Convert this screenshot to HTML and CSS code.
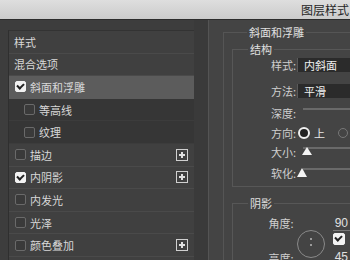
FILE: index.html
```html
<!DOCTYPE html>
<html lang="zh">
<head>
    <meta charset="UTF-8">
    <title>图层样式</title>
    <link rel="stylesheet" href="styles.css">
</head>
<body>
<div class="titlebar">图层样式</div>
<div class="dialog">
    <div class="sidebar">
        <div class="row head">样式</div>
        <div class="row head">混合选项</div>
        <div class="row active"><span class="check on"></span>斜面和浮雕</div>
        <div class="subgroup">
            <div class="row sub"><span class="check"></span>等高线</div>
            <div class="row sub"><span class="check"></span>纹理</div>
        </div>
        <div class="row"><span class="check"></span>描边<span class="plus"></span></div>
        <div class="row"><span class="check on"></span>内阴影<span class="plus"></span></div>
        <div class="row"><span class="check"></span>内发光</div>
        <div class="row"><span class="check"></span>光泽</div>
        <div class="row"><span class="check"></span>颜色叠加<span class="plus"></span></div>
    </div>
    <div class="strip"></div>
    <div class="main">
        <fieldset class="group">
            <legend>斜面和浮雕</legend>
            <fieldset class="box structure">
                <legend>结构</legend>
                <div class="field r1"><label>样式:</label><div class="select">内斜面</div></div>
                <div class="field r2"><label>方法:</label><div class="select">平滑</div></div>
                <div class="field r3"><label>深度:</label><div class="slider"></div></div>
                <div class="field r4"><label>方向:</label><span class="radio on"></span><span class="opt">上</span><span class="radio"></span><span class="opt">下</span></div>
                <div class="field r5"><label>大小:</label><div class="slider"><span class="thumb t5"></span></div></div>
                <div class="field r6"><label>软化:</label><div class="slider"><span class="thumb t6"></span></div></div>
            </fieldset>
            <fieldset class="box shadow">
                <legend>阴影</legend>
                <div class="angle">
                    <div class="labels">
                        <label>角度:</label>
                        <label class="low">高度:</label>
                    </div>
                    <div class="dial"><span class="dot d1"></span><span class="dot d2"></span></div>
                    <div class="values">
                        <span class="num">90</span>
                        <span class="check on"></span>
                        <span class="num low">45</span>
                    </div>
                </div>
            </fieldset>
        </fieldset>
    </div>
</div>
</body>
</html>
```

FILE: styles.css
```css
body {
    margin: 0;
    width: 350px;
    height: 260px;
    overflow: hidden;
    background-color: #3f3f3f;
    font-family: "Noto Sans CJK SC", "Noto Sans", sans-serif;
    font-size: 11px;
    color: #d8d8d8;
}
.titlebar {
    height: 20px;
    line-height: 20px;
    background: linear-gradient(#dedede, #cbcbcb);
    border-bottom: 1px solid #2c2c2c;
    box-sizing: border-box;
    text-align: right;
    padding-right: 1px;
    color: #262626;
    font-size: 12px;
    white-space: nowrap;
}
.dialog {
    display: flex;
    height: 240px;
    padding-left: 8px;
    background-color: #3d3d3d;
}
.sidebar {
    width: 186px;
    margin-top: 10px;
    border-left: 1px solid #2f2f2f;
    border-top: 1px solid #333;
    background-color: #404040;
    box-sizing: border-box;
    flex-shrink: 0;
}
.row {
    height: 22.6px;
    display: flex;
    align-items: center;
    padding-left: 6px;
    border-bottom: 1px solid #4a4a4a;
    box-sizing: border-box;
    white-space: nowrap;
}
.row.head {
    padding-left: 5px;
}
.row.active {
    background-color: #5c5c5c;
    border-bottom-color: #5c5c5c;
}
.subgroup {
    background-color: #363636;
}
.row.sub {
    padding-left: 15px;
    border-bottom-color: #3c3c3c;
}
.check {
    width: 9px;
    height: 9px;
    border: 1px solid #6a6a6a;
    border-radius: 2px;
    background-color: #3a3a3a;
    margin-right: 4px;
    flex-shrink: 0;
    position: relative;
}
.check.on {
    background-color: #f2f2f2;
    border-color: #f2f2f2;
}
.check.on::after {
    content: "";
    position: absolute;
    left: 1px;
    top: 1px;
    width: 5px;
    height: 3px;
    border-left: 2px solid #222;
    border-bottom: 2px solid #222;
    transform: rotate(-45deg);
}
.plus {
    margin-left: auto;
    margin-right: 6px;
    width: 10px;
    height: 10px;
    border: 1px solid #d0d0d0;
    position: relative;
}
.plus::before, .plus::after {
    content: "";
    position: absolute;
    background-color: #e0e0e0;
}
.plus::before {
    left: 2px;
    top: 4px;
    width: 6px;
    height: 2px;
}
.plus::after {
    left: 4px;
    top: 2px;
    width: 2px;
    height: 6px;
}
.strip {
    width: 14px;
    background-color: #3a3a3a;
    border-right: 1px solid #545454;
    flex-shrink: 0;
}
.main {
    flex: 1;
    background-color: #444;
    padding-left: 14px;
    overflow: hidden;
}
fieldset {
    margin: 0;
    padding: 0;
    min-width: 0;
}
.group {
    margin-top: 6px;
    border: 1px solid #555;
    border-right: none;
    height: 260px;
    padding: 8px 0 0 8px;
}
.group > legend {
    padding: 0 2px;
    margin-left: 15px;
    color: #e0e0e0;
    line-height: 12px;
}
.box {
    border: 1px solid #575757;
    border-right: none;
    position: relative;
}
.box > legend {
    padding: 0 2px;
    margin-left: 15px;
    line-height: 12px;
    color: #e0e0e0;
}
.structure {
    height: 142px;
    margin-top: -3px;
}
.field {
    display: flex;
    align-items: center;
    height: 20px;
    white-space: nowrap;
}
.field label {
    width: 63px;
    text-align: right;
    padding-right: 1px;
    color: #cfcfcf;
    flex-shrink: 0;
}
.r1 { margin-top: 0; }
.r2 { margin-top: 6px; }
.r3 { margin-top: 2px; }
.r4 { margin-top: 0; }
.r5 { margin-top: -1px; }
.r6 { margin-top: 1px; }
.select {
    flex: 1;
    height: 14px;
    line-height: 14px;
    background-color: #2b2b2b;
    border-left: 1px solid #5a5a5a;
    padding-left: 6px;
    color: #f0f0f0;
}
.slider {
    flex: 1;
    height: 20px;
    position: relative;
    margin-left: 6px;
}
.slider::before {
    content: "";
    position: absolute;
    left: 0;
    right: 0;
    top: 5px;
    height: 2px;
    background-color: #6a6a6a;
}
.thumb {
    position: absolute;
    top: 5px;
    width: 0;
    height: 0;
    border-left: 5px solid transparent;
    border-right: 5px solid transparent;
    border-bottom: 8px solid #f4f4f4;
}
.t5 { left: -1px; }
.t6 { left: -6px; top: 5px; border-bottom-width: 9px; }
.radio {
    width: 8px;
    height: 8px;
    border-radius: 50%;
    border: 1px solid #777;
    margin-left: 1px;
    flex-shrink: 0;
}
.radio.on {
    background-color: #222;
    border: 2px solid #f0f0f0;
    margin-left: 1px;
}
.opt {
    margin: 0 12px 0 4px;
    color: #e8e8e8;
}
.shadow {
    margin-top: 10px;
    height: 80px;
}
.angle {
    display: flex;
    padding-top: 7px;
}
.labels {
    width: 64px;
    display: flex;
    flex-direction: column;
    align-items: flex-end;
}
.labels label {
    color: #cfcfcf;
    line-height: 14px;
}
.labels .low {
    margin-top: 21px;
}
.dial {
    width: 26px;
    height: 26px;
    border: 1.5px solid #8a8a8a;
    border-radius: 50%;
    margin: 14px 0 0 3px;
    position: relative;
    flex-shrink: 0;
}
.dot {
    position: absolute;
    left: 12px;
    width: 2px;
    height: 2px;
    background-color: #9a9a9a;
}
.d1 { top: 7px; }
.d2 { top: 13px; }
.values {
    margin-left: 8px;
    display: flex;
    flex-direction: column;
    align-items: flex-start;
    font-family: "Liberation Sans", sans-serif;
    font-size: 12px;
}
.values .num {
    line-height: 14px;
    color: #e0e0e0;
    border-bottom: 1px solid #777;
    padding: 0 2px;
}
.values .check {
    margin: 2px 0 0;
    width: 10px;
    height: 10px;
}
.values .low {
    margin-top: 5px;
    border-bottom: none;
}
```
